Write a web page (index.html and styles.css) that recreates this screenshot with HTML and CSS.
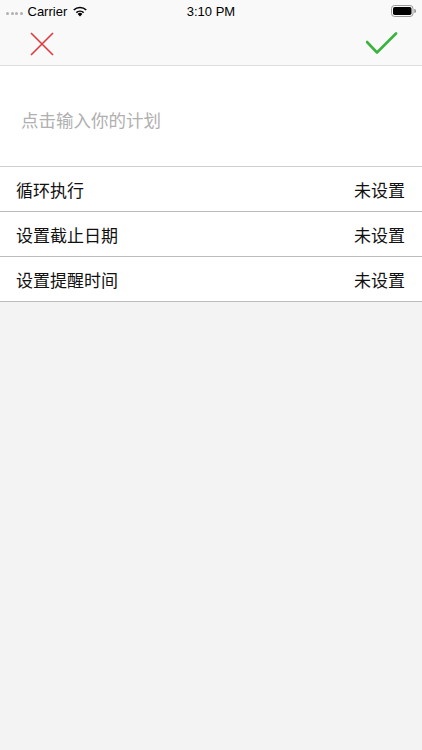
FILE: index.html
```html
<!DOCTYPE html>
<html lang="zh">
<head>
<meta charset="utf-8">
<title>计划</title>
<link rel="stylesheet" href="styles.css">
</head>
<body>
<div class="screen">
  <div class="top">
    <div class="status">
      <div class="status-left">
        <span class="dots"><i></i><i></i><i></i><i></i></span>
        <span class="carrier">Carrier</span>
        <svg class="wifi" width="16" height="12" viewBox="0 0 16 12">
          <path d="M8 11.5 L5.6 8.9 A3.4 3.4 0 0 1 10.4 8.9 Z" fill="#000"/>
          <path d="M3.8 7.1 A6 6 0 0 1 12.2 7.1 L11.1 8.2 A4.5 4.5 0 0 0 4.9 8.2 Z" fill="#000"/>
          <path d="M1.2 4.5 A9.6 9.6 0 0 1 14.8 4.5 L13.7 5.6 A8.1 8.1 0 0 0 2.3 5.6 Z" fill="#000"/>
        </svg>
      </div>
      <div class="time">3:10 PM</div>
      <div class="status-right">
        <svg width="25" height="12" viewBox="0 0 25 12">
          <rect x="0.5" y="0.5" width="21.5" height="11" rx="3" fill="none" stroke="#999" stroke-width="1"/>
          <rect x="2" y="2" width="18.5" height="8" rx="1.8" fill="#000"/>
          <path d="M23.2 4 v4 a1.6 1.6 0 0 0 0 -4z" fill="#999"/>
        </svg>
      </div>
    </div>
    <div class="nav">
      <svg class="icon-close" width="24" height="24" viewBox="0 0 24 24">
        <path d="M1 1 L23 23 M23 1 L1 23" stroke="#e0383b" stroke-width="1.6" fill="none"/>
      </svg>
      <svg class="icon-check" width="32" height="24" viewBox="0 0 32 24">
        <path d="M1 10 L11 20.5 L30 1.5" stroke="#3bb33f" stroke-width="2.6" fill="none" stroke-linecap="round" stroke-linejoin="round"/>
      </svg>
    </div>
  </div>
  <div class="input-area">
    <span class="placeholder">点击输入你的计划</span>
  </div>
  <div class="list">
    <div class="row"><span>循环执行</span><span>未设置</span></div>
    <div class="row"><span>设置截止日期</span><span>未设置</span></div>
    <div class="row"><span>设置提醒时间</span><span>未设置</span></div>
  </div>
</div>
</body>
</html>
```
FILE: styles.css
```css
* { box-sizing: border-box; }
html, body { margin: 0; padding: 0; }
body {
  width: 422px;
  height: 750px;
  background: #f3f3f3;
  font-family: "Noto Sans CJK SC", "Liberation Sans", sans-serif;
  overflow: hidden;
}
.screen { display: flex; flex-direction: column; }
.top {
  background: #f9f9f9;
  border-bottom: 1px solid #dedede;
}
.status {
  height: 22px;
  display: flex;
  align-items: center;
  justify-content: space-between;
  padding: 0 6px;
  position: relative;
  font-family: "Liberation Sans", sans-serif;
  font-size: 13px;
  color: #000;
}
.status-left { display: flex; align-items: center; gap: 5px; }
.dots { display: flex; gap: 1.5px; margin-top: 4px; }
.dots i { width: 3px; height: 3px; border-radius: 50%; background: #b0b0b0; display: block; }
.carrier { font-weight: 500; }
.time {
  position: absolute;
  left: 0; right: 0;
  text-align: center;
  font-weight: 500;
  pointer-events: none;
}
.status-right { display: flex; align-items: center; }
.nav {
  height: 43px;
  display: flex;
  align-items: center;
  justify-content: space-between;
  padding: 0 24px 0 30px;
}
.input-area {
  height: 101px;
  background: #fff;
  border-bottom: 1px solid #cfcfcf;
  display: flex;
  align-items: center;
  padding-left: 21px;
  padding-top: 6px;
}
.placeholder {
  color: #b0b0b0;
  font-size: 17.5px;
}
.list { background: #fff; }
.row {
  height: 45px;
  display: flex;
  align-items: center;
  justify-content: space-between;
  padding: 0 17px 0 16px;
  border-bottom: 1px solid #bcbcbc;
  font-size: 17px;
  color: #111;
}
```
